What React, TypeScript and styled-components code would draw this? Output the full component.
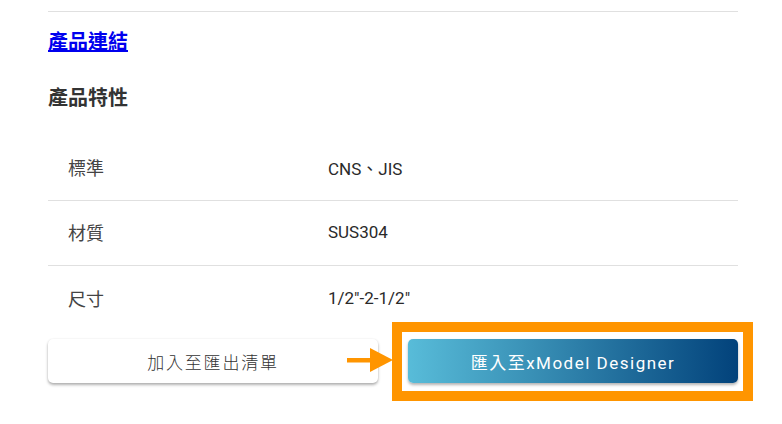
import React from 'react'
import styled, { createGlobalStyle } from 'styled-components'

interface ISpec {
   label: string;
   value: string;
}

const specs: ISpec[] = [
   { label: '標準', value: 'CNS、JIS' },
   { label: '材質', value: 'SUS304' },
   { label: '尺寸', value: '1/2"-2-1/2"' },
]

export default function App() {
   return (
      <>
         <GlobalStyle />
         <Page>
            <Divider />

            <ProductLink href="#">產品連結</ProductLink>

            <SectionTitle>產品特性</SectionTitle>

            <SpecTable>
               {specs.map((spec, i) => (
                  <SpecRow key={spec.label} $last={i === specs.length - 1}>
                     <SpecLabel>{spec.label}</SpecLabel>
                     <SpecValue>{spec.value}</SpecValue>
                  </SpecRow>
               ))}
            </SpecTable>

            <Actions>
               <PlainButton>加入至匯出清單</PlainButton>

               <HighlightSlot>
                  <Highlight />
                  <Arrow width="46" height="24" viewBox="0 0 46 24">
                     <rect x="0" y="10" width="24" height="4.5" fill="#ff9500" />
                     <polygon points="23,0 46,12 23,24" fill="#ff9500" />
                  </Arrow>
                  <GradientButton>匯入至xModel Designer</GradientButton>
               </HighlightSlot>
            </Actions>
         </Page>
      </>
   )
}


const GlobalStyle = createGlobalStyle`
   body {
      margin: 0;
      background: #ffffff;
      font-family: Roboto, "Noto Sans CJK TC", sans-serif;
   }
`

const Page = styled.div`
   width: 690px;
   min-height: 424px;
   box-sizing: border-box;
   margin-left: 48px;
   padding-top: 11px;
   display: flex;
   flex-direction: column;
`

const Divider = styled.div`
   height: 1px;
   background: #e0e0e0;
`

const ProductLink = styled.a`
   margin-top: 16px;
   align-self: flex-start;
   font-size: 20px;
   font-weight: 700;
   line-height: 28px;
   color: #0000ee;
   text-decoration: underline;
`

const SectionTitle = styled.h3`
   margin: 28px 0 0;
   font-size: 20px;
   font-weight: 700;
   line-height: 28px;
   color: #333333;
`

const SpecTable = styled.div`
   margin-top: 24px;
   display: flex;
   flex-direction: column;
`

const SpecRow = styled.div<{ $last?: boolean }>`
   height: 65px;
   padding-bottom: 2px;
   display: grid;
   grid-template-columns: 280px 1fr;
   align-items: center;
   border-bottom: ${p => (p.$last ? 'none' : '1px solid #e0e0e0')};
   box-sizing: border-box;
`

const SpecLabel = styled.div`
   padding-left: 20px;
   font-size: 18px;
   color: #444444;
`

const SpecValue = styled.div`
   font-size: 17px;
   color: #2a2a2a;
`

const Actions = styled.div`
   margin-top: 8px;
   display: grid;
   grid-template-columns: 330px 330px;
   justify-content: space-between;
   align-items: start;
`

const PlainButton = styled.button`
   height: 44px;
   border: none;
   border-radius: 5px;
   background: #ffffff;
   box-shadow: 0 2px 3px rgba(0, 0, 0, 0.3), 0 0 2px rgba(0, 0, 0, 0.08);
   font-family: Roboto, "Noto Sans CJK TC", sans-serif;
   font-size: 17px;
   font-weight: 300;
   letter-spacing: 1.8px;
   color: #333333;
   cursor: pointer;
`

const HighlightSlot = styled.div`
   position: relative;
   display: flex;
`

const Highlight = styled.div`
   position: absolute;
   left: -16px;
   right: -15px;
   top: -17px;
   bottom: -18px;
   border: 10px solid #ff9500;
   pointer-events: none;
`

const Arrow = styled.svg`
   position: absolute;
   left: -61px;
   top: 9px;
`

const GradientButton = styled.button`
   flex: 1;
   height: 44px;
   border: none;
   border-radius: 5px;
   background: linear-gradient(90deg, #58bcd9 0%, #3b93b8 35%, #02427b 100%);
   box-shadow: 0 2px 3px rgba(0, 0, 0, 0.3);
   font-family: Roboto, "Noto Sans CJK TC", sans-serif;
   font-size: 17px;
   font-weight: 400;
   letter-spacing: 1.5px;
   color: #ffffff;
   cursor: pointer;
`
